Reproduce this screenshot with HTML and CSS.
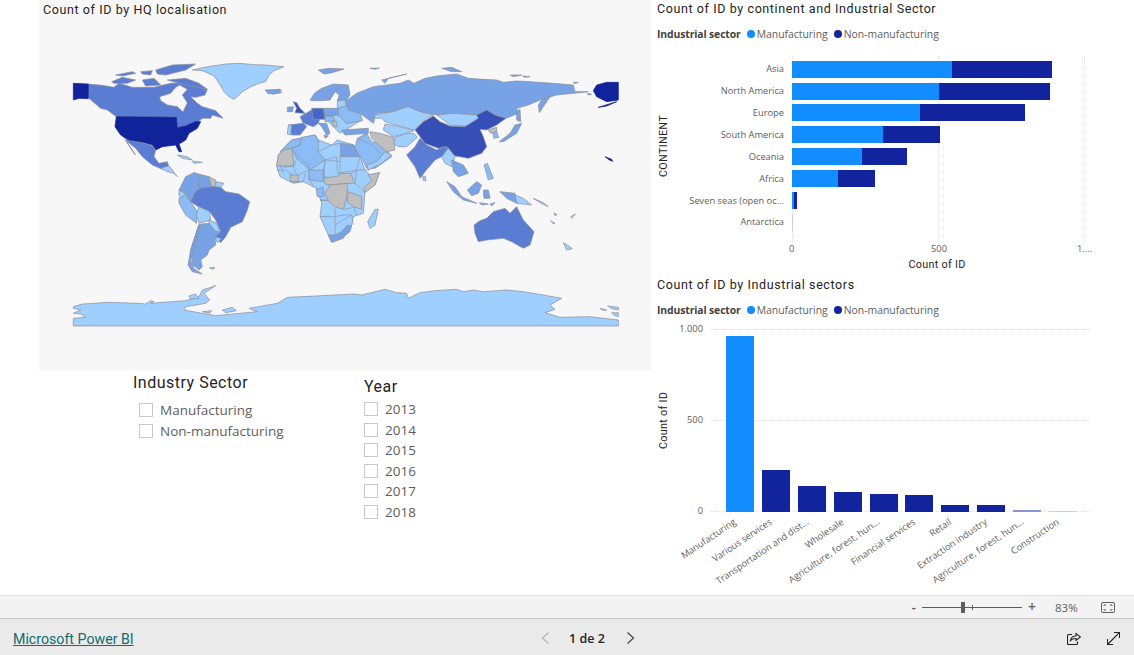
FILE: index.html
```html
<!DOCTYPE html>
<html lang="en">
<head>
<meta charset="utf-8">
<title>Microsoft Power BI</title>
<link rel="stylesheet" href="styles.css">
</head>
<body>
<main class="report">
  <section class="left">
    <figure class="map-card">
      <h2 class="title map-title">Count of ID by HQ localisation</h2>
      <svg class="map" viewBox="0 0 1836 1110" aria-label="World map">
        <!-- North America -->
        <g>
          <path class="c3" d="M148 252L190 256 225 262 240 250 280 262 345 262 395 250 430 248 505 268 498 285 470 292 455 290 475 310 490 320 530 332 552 355 520 345 515 355 490 355 470 372 440 378 415 383 412 352 232 350 205 330 185 325 150 295Z"/>
          <path class="bg" d="M362 290L395 280 410 262 422 255 445 268 430 285 445 308 432 336 415 320 385 315 365 302Z"/>
          <path class="c3" d="M218 245L250 232 290 240 265 250 225 250ZM230 225L280 215 290 220 250 228ZM305 215L340 212 335 225 310 222ZM350 210L400 195 470 192 440 210 380 225 355 222ZM385 240L440 235 480 250 505 268 440 255ZM310 240L345 235 365 255 320 258Z"/>
          <path class="c5" d="M103 250L148 252 148 296 120 295 103 300Z"/>
          <path class="c5" d="M232 350L412 352 415 383 440 378 470 365 485 365 475 385 450 400 440 420 420 432 428 455 420 455 410 435 370 440 350 450 340 435 310 428 275 425 245 405 228 380Z"/>
          <path class="c3" d="M258 420L310 428 340 437 350 450 345 470 360 490 385 485 390 500 370 508 340 495 310 470 290 445ZM262 425L285 460 290 465 270 435Z"/>
          <path class="c0" d="M365 505L390 497 400 510 415 530 405 520 385 515ZM415 465L445 470 460 480 430 475ZM460 483L490 487 465 490Z"/>
          <path class="c0" d="M460 210L490 203 520 198 560 192 600 190 645 194 680 195 735 200 705 212 690 225 680 245 660 250 640 258 610 275 600 285 585 298 570 290 555 275 540 250 530 235 520 225 490 212Z"/>
          <path class="c0" d="M690 272L725 268 728 278 700 283Z"/>
          <path class="c2" d="M838 210L870 205 915 207 880 218 855 222Z"/>
        </g>
        <!-- South America -->
        <g>
          <path class="c1" d="M420 595L440 580 455 605 475 635 472 670 440 645 420 610Z"/>
          <path class="c0" d="M420 570L440 580 425 595 420 585Z"/>
          <path class="c2" d="M440 530L465 518 480 530 480 560 470 575 455 605 440 580 420 570Z"/>
          <path class="c2" d="M465 518L510 530 520 545 520 560 480 565 480 530Z"/>
          <path class="gy" d="M510 530L530 540 530 560 518 560Z"/>
          <path class="c0" d="M530 545L555 550 545 562 530 562Z"/>
          <path class="c3" d="M455 605L470 575 480 565 520 560 545 562 560 575 600 582 632 605 625 630 610 665 575 682 560 710 545 728 528 710 545 695 530 660 512 635 478 620Z"/>
          <path class="c0" d="M480 620L512 635 515 660 480 670 472 645Z"/>
          <path class="c0" d="M510 660L530 668 545 695 530 695 510 675Z"/>
          <path class="c0" d="M528 710L548 716 535 728Z"/>
          <path class="c2" d="M480 673L510 670 530 695 545 697 528 710 530 735 510 750 505 765 485 780 490 800 480 810 462 795 458 775 455 750Z"/>
          <path class="c2" d="M478 678L455 750 447 795 460 815 490 822 465 806 455 780 464 745 482 685Z"/>
          <path class="c0" d="M512 803L528 803 520 808Z"/>
        </g>
        <!-- Antarctica -->
        <path class="c0" d="M103 978L103 955 140 952 125 942 103 940 125 930 103 925 103 920 130 912 210 907 300 910 320 912 335 902 345 905 335 910 440 902 480 890 490 870 530 857 495 880 512 900 500 910 440 920 435 930 490 940 530 947 655 935 630 925 715 910 745 892 830 888 943 882 968 885 1038 868 1073 878 1103 880 1108 895 1143 878 1188 872 1253 868 1273 875 1303 870 1333 875 1403 870 1453 875 1513 885 1568 895 1533 915 1548 928 1518 938 1563 952 1653 950 1738 960 1738 978Z"/>
        <path class="c0" d="M1683 925L1703 930 1690 931ZM1706 918L1738 922 1738 930 1718 926ZM1718 938L1738 938 1738 950 1725 946ZM450 888L470 882 480 895 455 898ZM550 930L580 922 592 932 560 938ZM490 935L518 932 512 940Z"/>
        <!-- Africa and Middle East, north part -->
        <g transform="translate(633 240)">
          <path class="c0" d="M80 258L85 225 110 195 125 180 195 165 205 180 245 195 262 180 312 195 330 230 345 270 360 285 388 278 375 315 345 335 340 400 310 410 305 435 280 475 245 487 235 465 210 410 215 370 200 325 160 305 130 310 90 290Z"/>
          <path class="c1" d="M90 215L110 195 125 180 155 175 150 195 125 205 100 210Z"/>
          <path class="c1" d="M125 205L150 195 155 172 195 165 205 180 205 215 225 240 180 270 140 235Z"/>
          <path class="gy" d="M80 258L85 225 100 210 125 205 132 258Z"/>
          <path class="c2" d="M272 190L310 195 328 230 272 230Z"/>
          <path class="ln" d="M205 215L245 195 272 190M225 240L272 245M132 215L175 255 180 270 175 300M225 240L222 290M270 230L270 300 320 270 330 230M100 262L132 258 140 235M222 290L270 300M175 300L222 290"/>
          <path class="c1" d="M315 205L322 175 350 160 365 185 400 195 425 230 375 265 350 265 335 235Z"/>
          <path class="ln" d="M322 175L365 195 395 225 375 265M350 160L322 190"/>
          <!-- Europe -->
          <path class="c2" d="M180 60L195 38 215 25 250 12 295 15 300 45 290 60 262 62 268 45 255 35 240 60 215 62 185 62Z"/>
          <path class="ln" d="M215 30L240 60M255 35L275 15"/>
          <path class="c0" d="M225 108L265 105 290 130 335 120 290 148 270 160 250 140 235 125Z"/>
          <path class="c0" d="M262 62L290 60 300 75 262 85Z"/>
          <path class="c1" d="M262 85L300 75 330 100 338 122 290 130 265 105Z"/>
          <path class="c2" d="M220 85L265 85 265 105 225 108Z"/>
          <path class="c1" d="M225 108L250 110 255 122 225 125Z"/>
          <path class="gy" d="M245 125L260 125 262 140 250 138Z"/>
          <path class="c6" d="M130 65L140 68 150 85 165 100 135 98 140 85Z"/>
          <path class="c2" d="M112 82L130 80 128 95 112 95Z"/>
          <path class="c3" d="M150 110L185 90 215 100 205 130 190 140 160 130Z"/>
          <path class="c4" d="M185 85L220 85 225 118 190 118Z"/>
          <path class="c3" d="M115 135L160 130 170 140 150 165 125 165Z"/>
          <path class="c0" d="M115 135L125 135 122 165 112 162Z"/>
          <path class="c2" d="M205 130L230 130 240 160 230 165 215 140ZM222 165L235 168 225 175Z"/>
          <path class="c2" d="M275 150L355 145 355 160 285 165Z"/>
          <path class="c2" d="M45 30L90 28 88 38 55 42Z"/>
        </g>
        <!-- Africa, south part -->
        <g transform="translate(663 450)">
          <path class="c1" d="M145 60L190 60 190 95 150 90Z"/>
          <path class="gy" d="M195 102L192 85 235 78 240 70 272 70 285 100 262 100 215 105Z"/>
          <path class="gy" d="M180 150L205 150 195 130 210 105 262 100 262 125 258 150 250 178 225 170 205 152Z"/>
          <path class="gy" d="M265 125L305 140 305 178 280 170 262 155Z"/>
          <path class="gy" d="M358 68L345 105 315 128 312 112 335 92 325 75Z"/>
          <path class="gy" d="M90 75L115 75 115 95 92 95Z"/>
          <path class="c2" d="M205 255L225 255 245 245 262 225 275 228 270 245 245 265 215 277Z"/>
          <path class="c1" d="M168 118L190 112 192 140 172 140Z"/>
          <path class="ln" d="M50 60L75 60 100 75M115 75L145 60M130 95L135 70M150 90L160 110M190 60L195 30 230 20M190 60L192 85M230 20L232 70M232 70L290 60 330 60M285 100L315 128M285 100L290 60M185 200L225 200 225 255M225 200L250 195 275 195 280 225M225 175L225 200M250 178L282 172 290 195M180 200L210 198M225 225L275 195M60 45L70 70M100 50L110 75M95 95L130 95"/>
          <path class="c0" d="M345 178L355 178 345 225 330 235 323 215Z"/>
        </g>
        <!-- Asia and Oceania -->
        <g transform="translate(903 150)">
          <path class="c0" d="M85 360L125 340 155 315 135 305 110 335 80 345Z"/>
          <path class="c2" d="M15 155L50 130 100 110 140 105 180 100 205 90 222 100 255 85 290 78 350 72 385 85 430 88 470 90 490 97 530 93 570 95 640 100 700 105 705 125 745 125 700 130 650 135 600 150 565 165 530 175 535 190 498 205 470 195 438 180 410 195 340 190 290 195 240 185 200 170 160 185 110 190 100 220 60 190 25 180Z"/>
          <path class="c2" d="M595 165L605 150 630 140 610 170 598 188Z"/>
          <path class="c2" d="M125 90L200 72 145 85 135 100ZM305 55L335 52 365 65 335 65ZM90 55L118 54 105 58ZM510 75L545 75 520 80ZM548 78L570 80 555 82ZM700 97L715 97 705 101ZM742 130L755 133 745 135Z"/>
          <path class="c0" d="M100 195L160 185 205 170 240 185 280 195 260 205 222 240 170 225 135 215 125 205 110 205Z"/>
          <path class="c0" d="M290 195L340 190 410 195 420 205 380 228 330 225Z"/>
          <path class="c6" d="M225 240L250 215 280 198 300 215 330 228 375 230 415 205 410 195 440 180 465 195 498 205 470 225 440 240 420 238 430 260 440 290 425 310 385 325 360 320 345 318 320 290 295 295 255 280Z"/>
          <path class="c0" d="M135 222L170 228 222 242 200 250 160 260 130 240Z"/>
          <path class="c3" d="M200 315L225 290 240 265 260 285 290 300 310 290 328 295 305 320 285 330 255 365 240 385 225 350Z"/>
          <path class="c0" d="M160 280L175 290 200 290 232 262 222 250 200 250 165 262Z"/>
          <path class="gy" d="M90 245L120 250 160 262 165 300 140 305 115 285 95 265Z"/>
          <path class="c0" d="M248 378L256 380 258 392 250 392Z"/>
          <path class="c0" d="M305 320L325 295 345 320 335 350 315 340Z"/>
          <path class="c2" d="M335 330L370 345 385 370 355 380 340 365Z"/>
          <path class="c2" d="M320 395L345 410 365 440 410 460 370 450 340 425Z"/>
          <path class="c2" d="M382 420L410 395 425 405 415 430 395 437Z"/>
          <path class="c2" d="M430 420L445 420 450 445 432 445ZM418 458L445 462 425 465ZM450 462L465 458 455 468Z"/>
          <path class="c1" d="M432 345L442 340 460 385 445 390Z"/>
          <path class="c2" d="M480 425L525 430 530 460 500 445Z"/>
          <path class="c0" d="M525 435L550 445 575 465 530 460Z"/>
          <path class="c2" d="M478 275L510 250 525 225 545 220 530 250 490 275ZM530 185L540 178 542 215 530 210Z"/>
          <path class="gy" d="M445 240L470 232 470 245 452 250Z"/>
          <path class="c1" d="M458 248L470 245 476 262 462 265Z"/>
          <path class="c3" d="M402 525L420 512 440 505 460 485 495 475 510 490 530 470 550 510 582 545 570 585 550 595 515 575 490 565 440 570 415 575 405 550Z"/>
          <path class="c0" d="M670 578L682 585 697 596 680 600ZM632 512L645 520 640 522ZM692 500L706 492 695 505ZM642 488L650 494 645 497ZM580 445L610 458 625 470 600 458Z"/>
          <path class="c5" d="M770 105L800 97 835 97 835 150 800 155 770 140 760 122Z"/>
          <path class="c5" d="M775 172L830 155 800 168ZM795 320L815 328 818 334 808 330Z"/>
        </g>
      </svg>
    </figure>
    <div class="slicers">
      <div class="slicer sector">
        <h3 class="slicer-title">Industry Sector</h3>
        <label class="opt"><span class="box"></span>Manufacturing</label>
        <label class="opt"><span class="box"></span>Non-manufacturing</label>
      </div>
      <div class="slicer year">
        <h3 class="slicer-title">Year</h3>
        <label class="opt"><span class="box"></span>2013</label>
        <label class="opt"><span class="box"></span>2014</label>
        <label class="opt"><span class="box"></span>2015</label>
        <label class="opt"><span class="box"></span>2016</label>
        <label class="opt"><span class="box"></span>2017</label>
        <label class="opt"><span class="box"></span>2018</label>
      </div>
    </div>
  </section>

  <section class="right">
    <article class="chart hchart">
      <h2 class="title">Count of ID by continent and Industrial Sector</h2>
      <div class="legend"><b>Industrial sector</b><i class="dot light"></i><span>Manufacturing</span><i class="dot dark"></i><span>Non-manufacturing</span></div>
      <div class="hbody">
        <div class="yaxis-title">CONTINENT</div>
        <div class="hcats">
          <span>Asia</span><span>North America</span><span>Europe</span><span>South America</span><span>Oceania</span><span>Africa</span><span>Seven seas (open oc...</span><span>Antarctica</span>
        </div>
        <div class="hplot">
          <i class="vgrid g0"></i><i class="vgrid g1"></i><i class="vgrid g2"></i>
          <div class="hrow"><b class="seg light" style="width:160px"></b><b class="seg dark" style="width:100px"></b></div>
          <div class="hrow"><b class="seg light" style="width:147px"></b><b class="seg dark" style="width:111px"></b></div>
          <div class="hrow"><b class="seg light" style="width:128px"></b><b class="seg dark" style="width:105px"></b></div>
          <div class="hrow"><b class="seg light" style="width:91px"></b><b class="seg dark" style="width:57px"></b></div>
          <div class="hrow"><b class="seg light" style="width:70px"></b><b class="seg dark" style="width:45px"></b></div>
          <div class="hrow"><b class="seg light" style="width:46px"></b><b class="seg dark" style="width:37px"></b></div>
          <div class="hrow"><b class="seg light" style="width:2px"></b><b class="seg dark" style="width:3px"></b></div>
          <div class="hrow"><b class="seg faint" style="width:1px"></b></div>
        </div>
      </div>
      <div class="hticks"><span>0</span><span>500</span><span>1....</span></div>
      <div class="xaxis-title">Count of ID</div>
    </article>

    <article class="chart vchart">
      <h2 class="title">Count of ID by Industrial sectors</h2>
      <div class="legend"><b>Industrial sector</b><i class="dot light"></i><span>Manufacturing</span><i class="dot dark"></i><span>Non-manufacturing</span></div>
      <div class="vbody">
        <div class="yaxis-title">Count of ID</div>
        <div class="vticks"><span>1.000</span><span>500</span><span>0</span></div>
        <div class="vplot">
          <i class="hgrid"></i><i class="hgrid mid"></i><i class="hgrid base"></i>
          <div class="vcol"><b class="vbar light" style="height:176px"></b><span class="xlab">Manufacturing</span></div>
          <div class="vcol"><b class="vbar dark" style="height:42px"></b><span class="xlab">Various services</span></div>
          <div class="vcol"><b class="vbar dark" style="height:26px"></b><span class="xlab">Transportation and dist...</span></div>
          <div class="vcol"><b class="vbar dark" style="height:20px"></b><span class="xlab">Wholesale</span></div>
          <div class="vcol"><b class="vbar dark" style="height:18px"></b><span class="xlab">Agriculture, forest, hun...</span></div>
          <div class="vcol"><b class="vbar dark" style="height:17px"></b><span class="xlab">Financial services</span></div>
          <div class="vcol"><b class="vbar dark" style="height:7px"></b><span class="xlab">Retail</span></div>
          <div class="vcol"><b class="vbar dark" style="height:7px"></b><span class="xlab">Extraction industry</span></div>
          <div class="vcol"><b class="vbar pale" style="height:2px"></b><span class="xlab">Agriculture, forest, hun...</span></div>
          <div class="vcol"><b class="vbar faint" style="height:1px"></b><span class="xlab">Construction</span></div>
        </div>
      </div>
    </article>
  </section>
</main>

<div class="zoombar">
  <span class="zm minus">-</span>
  <span class="slider"><i class="thumb"></i><i class="tick"></i></span>
  <span class="zm plus">+</span>
  <span class="pct">83%</span>
  <svg class="fit" width="14" height="11" viewBox="0 0 14 11"><rect x=".5" y=".5" width="13" height="10" rx="1.5"/><path d="M3 4V3H5M11 7V8H9M9 3H11V4M5 8H3V7"/></svg>
</div>

<footer class="footer">
  <a class="brand" href="#">Microsoft Power BI</a>
  <nav class="pager">
    <svg class="chev off" width="9" height="12" viewBox="0 0 9 12"><path d="M7.5 .5L1.500 6 7.5 11.5"/></svg>
    <span class="pages">1 de 2</span>
    <svg class="chev" width="9" height="12" viewBox="0 0 9 12"><path d="M1.500 .5L7.5 6 1.500 11.5"/></svg>
  </nav>
  <div class="actions">
    <svg class="act" width="14" height="13" viewBox="0 0 14 13"><path d="M5 2.500H1.500A1 1 0 0 0 .5 3.500V11.500A1 1 0 0 0 1.500 12.500H9.500A1 1 0 0 0 10.500 11.500V9.500"/><path d="M3.500 8.500C4 5.500 6 4 9 4V1.500L13.500 5 9 8.500V6.500C7 6.300 5 7 3.500 8.500Z"/></svg>
    <svg class="act" width="13" height="13" viewBox="0 0 13 13"><path d="M.5 12.500L12.500 .5M7 .5H12.500V6M.5 7V12.500H6"/></svg>
  </div>
</footer>
</body>
</html>
```

FILE: styles.css
```css
* { box-sizing: border-box; }
html, body { margin: 0; padding: 0; }
body {
  width: 1134px;
  height: 655px;
  overflow: hidden;
  background: #fff;
  font-family: "Open Sans", "Noto Sans", sans-serif;
  color: #252423;
}
h2, h3, figure { margin: 0; font-weight: 400; }

.report {
  height: 595px;
  display: grid;
  grid-template-columns: 612px 483px;
  padding-left: 39px;
}

.title {
  font-family: Roboto, "Liberation Sans", sans-serif;
  font-size: 12.500px;
  line-height: 16px;
  letter-spacing: .6px;
  color: #252423;
}

/* Map */
.map-card {
  position: relative;
  height: 370px;
  background: #f7f7f7;
}
.map-title {
  position: absolute;
  left: 4px;
  top: 2px;
}
.map { display: block; width: 612px; height: 370px; }
.map path { stroke: #8b909e; stroke-width: 2.200; stroke-linejoin: round; }
.map .ln { fill: none; stroke-width: 1.800; }
.map .bg { fill: #f7f7f7; }
.map .c0 { fill: #9fcfff; }
.map .c1 { fill: #8cbcf5; }
.map .c2 { fill: #78a2e6; }
.map .c3 { fill: #5a7cd2; }
.map .c4 { fill: #4665c8; }
.map .c5 { fill: #10239b; stroke: #10239b; }
.map .c6 { fill: #354fb7; }
.map .gy { fill: #bfbfbf; }

/* Slicers */
.slicers { display: flex; height: 225px; padding-left: 94px; }
.slicer-title {
  font-family: Roboto, "Liberation Sans", sans-serif;
  font-size: 16px;
  letter-spacing: .5px;
  line-height: 20px;
  color: #252423;
}
.sector { width: 231px; padding-top: 3px; }
.sector .slicer-title { margin-bottom: 7px; }
.sector .opt { padding-left: 6px; }
.year { padding-top: 7px; }
.year .slicer-title { margin-bottom: 2px; }
.opt {
  display: flex;
  align-items: center;
  height: 20.500px;
  font-size: 13.500px;
  color: #605e5c;
}
.box {
  width: 14px;
  height: 14px;
  border: 1px solid #c8c8c8;
  margin-right: 7px;
}

/* Right charts */
.right { padding-left: 6px; }
.chart { position: relative; }
.chart > .title { padding-top: 1px; line-height: 15px; height: 16px; }
.legend {
  display: flex;
  align-items: center;
  height: 14px;
  font-size: 10.400px;
  color: #605e5c;
}
.legend b { color: #44423f; margin-right: 6px; font-weight: 700; letter-spacing: -.12px; }
.dot { width: 8px; height: 8px; border-radius: 50%; margin-right: 2px; }
.dot.dark { margin-left: 6px; }
.light { background: #118dff; }
.dark { background: #12239e; }
.faint { background: #c9cfe8; }
.pale { background: #8c95d3; }

.hchart { height: 276px; }
.hchart .legend { margin-top: 11px; }
.hbody { display: flex; height: 186px; margin-top: 15px; }
.yaxis-title {
  writing-mode: vertical-rl;
  transform: rotate(180deg);
  text-align: center;
  width: 13px;
  height: 180px;
  font-family: Roboto, sans-serif;
  font-size: 10.800px;
  letter-spacing: .3px;
  line-height: 13px;
  color: #252423;
}
.hcats {
  width: 114px;
  padding-top: 2.200px;
  display: grid;
  grid-auto-rows: 21.900px;
  text-align: right;
  font-size: 9.300px;
  line-height: 21.900px;
  color: #605e5c;
  white-space: nowrap;
}
.hplot {
  position: relative;
  margin-left: 8px;
  flex: 1;
  padding-top: 2.200px;
}
.vgrid {
  position: absolute;
  top: 0;
  bottom: 0;
  border-left: 1px dotted #e0e0e0;
}
.g0 { left: 0; }
.g1 { left: 146px; }
.g2 { left: 292px; }
.hrow {
  position: relative;
  display: flex;
  height: 21.900px;
  padding: 2.500px 0;
}
.seg { display: block; height: 17px; }
.hticks {
  display: flex;
  height: 16px;
  margin-left: 132px;
  font-size: 9.300px;
  line-height: 14px;
  color: #605e5c;
}
.hticks span { flex: 0 0 146px; }
.hticks span + span { text-indent: -4px; }
.hticks span:last-child { flex: 0 0 auto; }
.xaxis-title {
  text-align: center;
  width: 292px;
  margin-left: 134px;
  font-size: 10.800px;
  line-height: 14px;
  font-family: Roboto, sans-serif;
  letter-spacing: .3px;
  color: #252423;
}

.vchart .legend { margin-top: 11px; }
.vbody { display: flex; height: 190px; margin-top: 12px; }
.vchart .yaxis-title { height: 182px; align-self: flex-start; }
.vticks {
  width: 33px;
  height: 194px;
  margin-top: -6px;
  display: flex;
  flex-direction: column;
  justify-content: space-between;
  text-align: right;
  font-size: 9.300px;
  line-height: 12px;
  color: #605e5c;
}
.vplot {
  position: relative;
  display: flex;
  align-items: flex-end;
  margin-left: 8px;
  padding-left: 15px;
  width: 378px;
  height: 182.500px;
}
.hgrid {
  position: absolute;
  left: 0;
  right: 0;
  top: 0;
  border-top: 1px dotted #e0e0e0;
}
.hgrid.mid { top: 91px; }
.hgrid.base { top: 182px; }
.vcol {
  position: relative;
  width: 28px;
  margin-right: 7.900px;
  display: flex;
  align-items: flex-end;
  height: 182.500px;
}
.vbar { display: block; width: 28px; position: relative; }
.xlab {
  position: absolute;
  top: 100%;
  right: 22px;
  margin-top: 4px;
  transform-origin: right top;
  transform: rotate(-34deg);
  font-size: 9.300px;
  line-height: 12px;
  white-space: nowrap;
  color: #605e5c;
}

/* Bars at the bottom */
.zoombar {
  height: 24px;
  display: flex;
  align-items: center;
  justify-content: flex-end;
  padding: 0 19px 0 0;
  background: #f3f3f3;
  border-top: 1px solid #e2e2e2;
  border-bottom: 1px solid #c8c8c8;
  color: #605e5c;
}
.zm { font-size: 14px; line-height: 14px; font-weight: 600; }
.slider {
  position: relative;
  width: 100px;
  height: 1px;
  margin: 0 6px;
  background: #605e5c;
}
.thumb {
  position: absolute;
  left: 39px;
  top: -5px;
  width: 4px;
  height: 11px;
  background: #605e5c;
}
.tick {
  position: absolute;
  left: 50px;
  top: -2px;
  width: 1px;
  height: 5px;
  background: #605e5c;
}
.pct { width: 24px; margin-left: 19px; margin-right: 22px; font-size: 11.500px; white-space: nowrap; }
.fit rect, .fit path { fill: none; stroke: #605e5c; stroke-width: 1; }

.footer {
  height: 36px;
  position: relative;
  display: flex;
  align-items: center;
  justify-content: space-between;
  padding: 2px 14px 0 13px;
  background: #eaeaea;
}
.brand {
  margin-top: 2px;
  font-family: Roboto, sans-serif;
  font-size: 14.200px;
  font-weight: 400;
  color: #0f6e6e;
  text-decoration: underline;
}
.pager {
  position: absolute;
  left: 541px;
  display: flex;
  align-items: center;
  gap: 19px;
}
.pages { margin-right: 2px; font-size: 12.500px; font-weight: 600; color: #252423; white-space: nowrap; }
.chev path { fill: none; stroke: #444; stroke-width: 1.200; }
.chev.off path { stroke: #b5b5b5; }
.actions { display: flex; gap: 26px; align-items: center; }
.act path { fill: none; stroke: #252423; stroke-width: 1.100; }
```
